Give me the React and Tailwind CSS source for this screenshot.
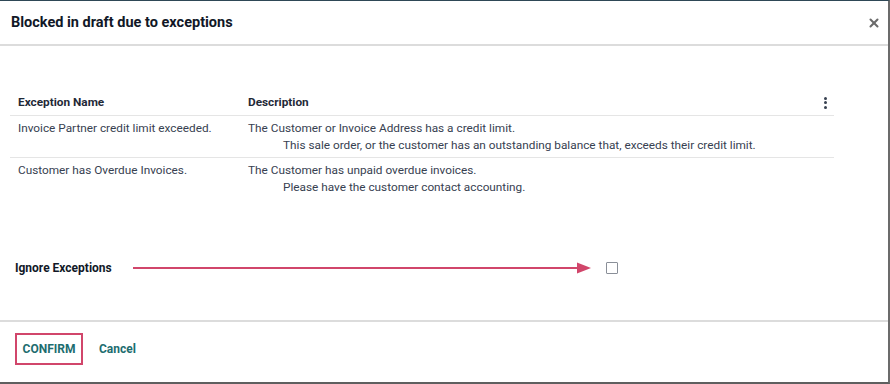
import { X } from "lucide-react";

const rows = [
  {
    name: "Invoice Partner credit limit exceeded.",
    desc: [
      "The Customer or Invoice Address has a credit limit.",
      "This sale order, or the customer has an outstanding balance that, exceeds their credit limit.",
    ],
  },
  {
    name: "Customer has Overdue Invoices.",
    desc: [
      "The Customer has unpaid overdue invoices.",
      "Please have the customer contact accounting.",
    ],
  },
];

export default function App() {
  return (
    <div
      className="w-[890px] h-[384px] bg-white flex flex-col overflow-hidden border-r-2 border-r-[#6b6b6b] border-b-2 border-b-[#5f5f5f] border-t border-t-[#2e4756]"
      style={{ fontFamily: "Roboto, 'Liberation Sans', sans-serif" }}
    >
      <div className="h-[45px] shrink-0 flex items-center justify-between pl-[11px] pr-[7px] border-b-2 border-[#dcdcdc]">
        <h1 className="text-[14.5px] font-bold text-[#111827]">
          Blocked in draft due to exceptions
        </h1>
        <X className="w-[14px] h-[14px] text-[#6b6b6b]" strokeWidth={3.5} />
      </div>

      <div className="flex-1 flex flex-col">
        <div className="pt-[45px] pl-[10px]">
          <table className="w-[824px] text-[11.8px] text-[#374151] border-collapse">
            <thead>
              <tr className="border-b border-[#e5e5e5]">
                <th className="w-[230px] text-left font-bold text-[#1f2937] px-2 h-[24px]">
                  Exception Name
                </th>
                <th className="text-left font-bold text-[#1f2937] px-2">
                  <div className="flex items-center justify-between">
                    <span>Description</span>
                    <span className="flex flex-col gap-[1.5px] mr-[-1px]">
                      <span className="w-[3px] h-[3px] bg-[#374151] rounded-full" />
                      <span className="w-[3px] h-[3px] bg-[#374151] rounded-full" />
                      <span className="w-[3px] h-[3px] bg-[#374151] rounded-full" />
                    </span>
                  </div>
                </th>
              </tr>
            </thead>
            <tbody>
              {rows.map((r, i) => (
                <tr
                  key={i}
                  className={i === 0 ? "border-b border-[#e5e5e5]" : ""}
                >
                  <td className="align-top px-2 pt-[4px] pb-[3px] leading-[17px]">
                    {r.name}
                  </td>
                  <td className="align-top px-2 pt-[4px] pb-[3px] leading-[17px]">
                    <div>{r.desc[0]}</div>
                    <div className="pl-[35px]">{r.desc[1]}</div>
                  </td>
                </tr>
              ))}
            </tbody>
          </table>
        </div>

        <div className="mt-[60px] pl-[15px] flex items-center">
          <span className="text-[12px] font-bold text-[#111827] w-[118px]">
            Ignore Exceptions
          </span>
          <svg width="460" height="12" viewBox="0 0 460 12" className="shrink-0">
            <line x1="0" y1="6" x2="446" y2="6" stroke="#d1466b" strokeWidth="2" />
            <path d="M444 0.5 L458 6 L444 11.5 Z" fill="#d1466b" />
          </svg>
          <span className="ml-[13px] mt-[1px] w-[12px] h-[12px] border border-[#8a8f98] rounded-[1px]" />
        </div>
      </div>

      <div className="h-[62px] shrink-0 border-t-2 border-[#dcdcdc] flex items-start pt-[11px] pl-[15px]">
        <button className="h-[32px] w-[68px] border-2 border-[#d1466b] text-[12px] font-bold text-[#1d6d6f] uppercase">
          Confirm
        </button>
        <button className="ml-[16px] h-[32px] text-[12px] font-bold text-[#1d6d6f]">
          Cancel
        </button>
      </div>
    </div>
  );
}
